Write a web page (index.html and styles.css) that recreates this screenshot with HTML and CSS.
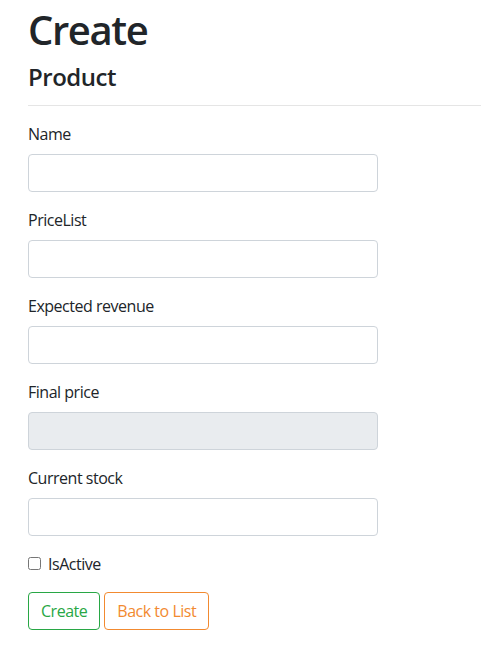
FILE: index.html
```html
<!DOCTYPE html>
<html>
<head>
<meta charset="utf-8">
<link rel="stylesheet" href="styles.css">
</head>
<body>
<div class="page">
  <h1 class="title">Create</h1>
  <h4 class="subtitle">Product</h4>
  <hr class="rule">
  <form class="form">
    <div class="group">
      <label class="label">Name</label>
      <input class="control" type="text">
    </div>
    <div class="group">
      <label class="label">PriceList</label>
      <input class="control" type="text">
    </div>
    <div class="group">
      <label class="label">Expected revenue</label>
      <input class="control" type="text">
    </div>
    <div class="group">
      <label class="label">Final price</label>
      <input class="control" type="text" readonly disabled>
    </div>
    <div class="group">
      <label class="label">Current stock</label>
      <input class="control" type="text">
    </div>
    <div class="group check">
      <label class="check-label"><input class="check-input" type="checkbox"> IsActive</label>
    </div>
    <div class="actions">
      <button type="button" class="btn btn-success">Create</button>
      <button type="button" class="btn btn-orange">Back to List</button>
    </div>
  </form>
</div>
</body>
</html>
```
FILE: styles.css
```css
* { box-sizing: border-box; }
html, body { margin: 0; padding: 0; background: #fff; }
body {
  font-family: "Open Sans", "Noto Sans", sans-serif;
  font-size: 16px;
  line-height: 1.5;
  letter-spacing: -0.03em;
  color: #212529;
}
.page { padding: 6px 0 0 28px; }
.title {
  font-size: 40px;
  font-weight: 600;
  line-height: 1.2;
  letter-spacing: -0.035em;
  margin: 0 0 9px;
}
.subtitle {
  font-size: 24px;
  font-weight: 600;
  line-height: 1.2;
  margin: 0;
}
.rule {
  margin: 13px 0 16px;
  border: 0;
  border-top: 1px solid rgba(0,0,0,0.1);
}
.form { width: 350px; }
.group { margin-bottom: 16px; }
.label { display: inline-block; margin-bottom: 8px; }
.control {
  display: block;
  width: 100%;
  height: 38px;
  padding: 6px 12px;
  font: inherit;
  letter-spacing: inherit;
  color: #495057;
  background: #fff;
  border: 1px solid #ced4da;
  border-radius: 4px;
}
.control:disabled { background: #e9ecef; }
.check-label { display: flex; align-items: center; gap: 7px; }
.check-input { margin: 0; width: 13px; height: 13px; }
.actions { display: flex; gap: 4px; }
.btn {
  font: inherit;
  letter-spacing: inherit;
  background: transparent;
  padding: 6px 12px;
  height: 38px;
  border-radius: 4px;
  border: 1px solid;
}
.btn-success { color: #28a745; border-color: #28a745; }
.btn-orange { color: #f28a30; border-color: #f28a30; }
```
